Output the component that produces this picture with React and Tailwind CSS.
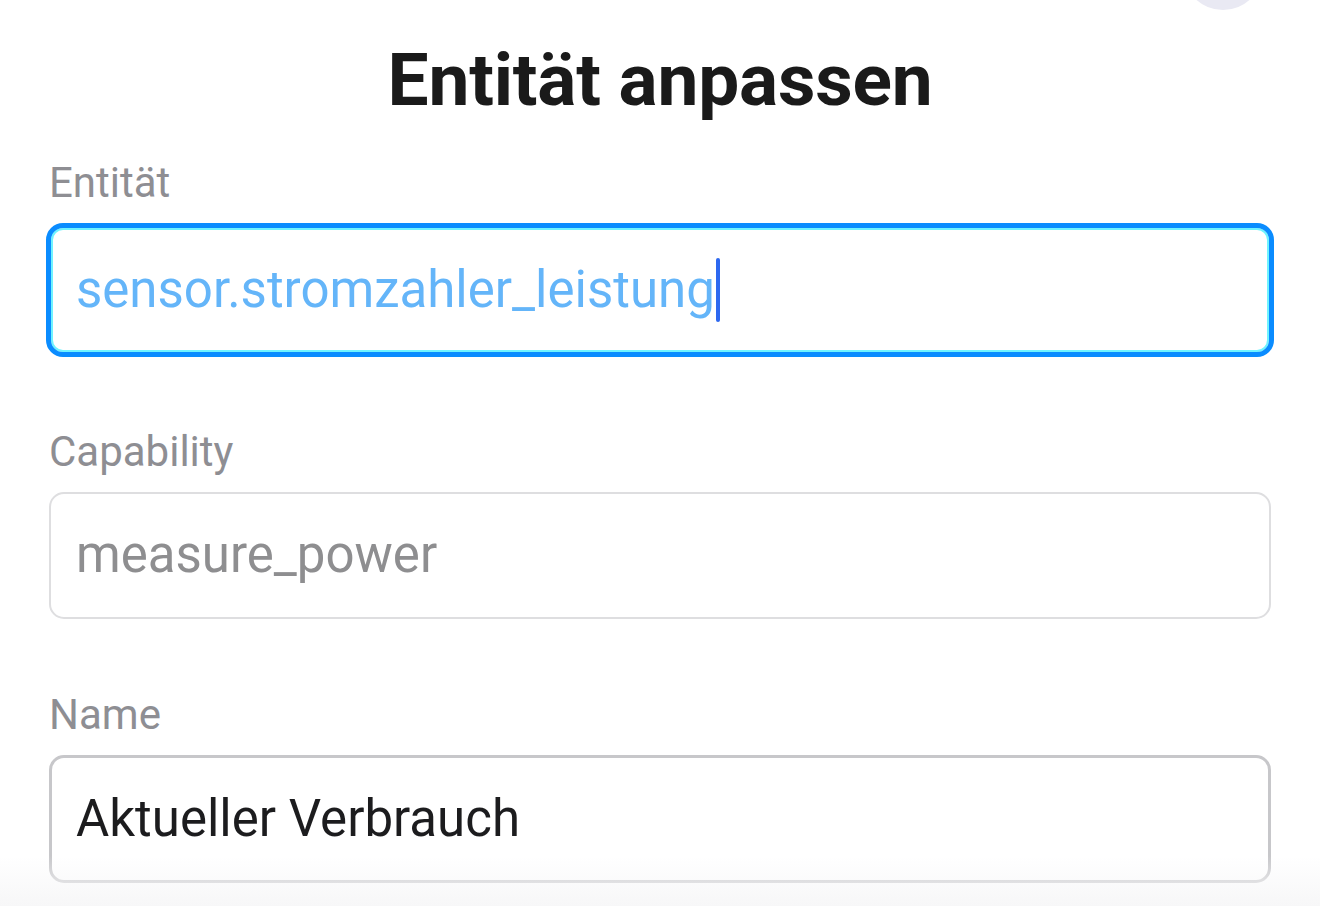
import React from 'react';

const font = { fontFamily: 'Roboto, "Noto Sans", sans-serif' };

const Label = ({ children }) => (
  <div className="h-[48px] leading-[48px] text-[42px] text-[#8e8e93] mb-[16px]">{children}</div>
);

export default function App() {
  return (
    <div className="relative w-[1320px] h-[906px] overflow-hidden bg-white" style={font}>
      {/* close button peeking from top */}
      <div className="absolute left-[1183px] top-[-70px] w-[80px] h-[80px] rounded-full bg-[#e9e9f3]" />

      <div className="pt-[40px] px-[49px]">
        <h1 className="h-[80px] leading-[80px] text-center text-[73px] font-bold text-[#1a1a1a] tracking-[-0.2px]">
          Entität anpassen
        </h1>

        <div className="mt-[39px]">
          <Label>Entität</Label>
          <div className="-mx-[3px] h-[134px] rounded-[17px] border-[5px] border-[#0a8cff] shadow-[inset_0_0_0_2px_#6ff3ff] flex items-center px-[25px]">
            <span className="text-[51px] text-[#64b5f9]">sensor.stromzahler_leistung</span>
            <span className="ml-[1px] w-[4px] h-[64px] rounded-full bg-[#2d68f0]" />
          </div>
        </div>

        <div className="mt-[71px]">
          <Label>Capability</Label>
          <div className="h-[127px] rounded-[15px] border-2 border-[#dedee0] flex items-center px-[25px]">
            <span className="text-[51px] text-[#8e8e90]">measure_power</span>
          </div>
        </div>

        <div className="mt-[72px]">
          <Label>Name</Label>
          <div className="h-[128px] rounded-[15px] border-[3px] border-[#c7c7ca] flex items-center px-[24px]">
            <span className="text-[51px] text-[#1c1c1e]">Aktueller Verbrauch</span>
          </div>
        </div>
      </div>

      {/* fading footer overlay */}
      <div className="pointer-events-none absolute left-0 right-0 bottom-0 h-[50px] bg-gradient-to-b from-transparent to-[#f7f7f8]" />
    </div>
  );
}
